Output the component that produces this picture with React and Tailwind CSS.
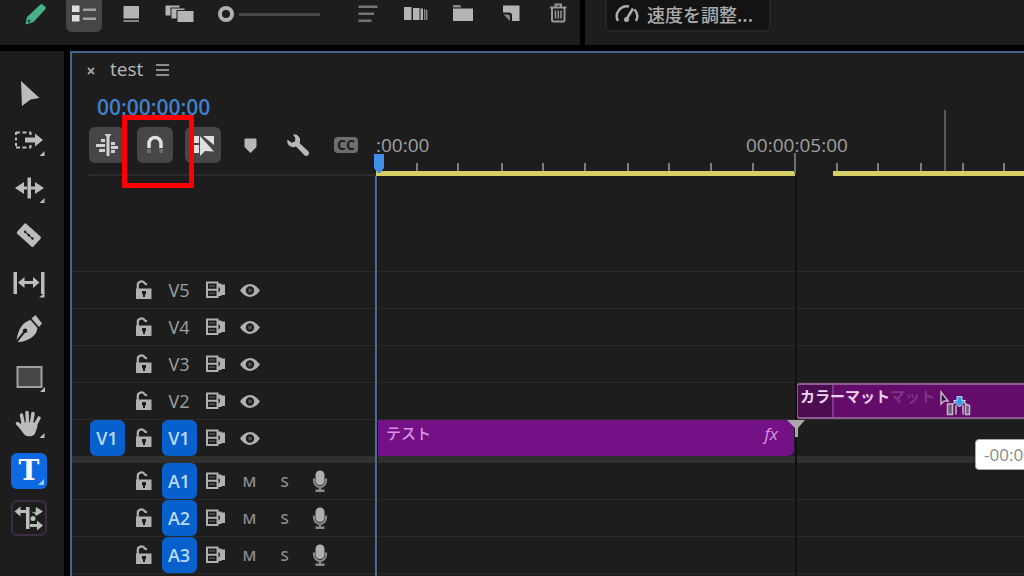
import React from "react";

const Icon = ({ size = 36, children, className = "" }) => (
  <svg width={size} height={size} viewBox={`0 0 ${size} ${size}`} fill="currentColor" className={`shrink-0 ${className}`} aria-hidden="true">
    {children}
  </svg>
);

const Corner = () => <path d="M33.500 27v5h-5z" />;

/* ---------- Tool strip ---------- */

const tools = [
  { name: "Selection", icon: <path d="M10 4 28.500 21 19.500 22.500 11 29z" /> },
  {
    name: "Track select",
    icon: (
      <>
        <path d="M5 8.500h15M5 23.500h15" fill="none" stroke="currentColor" strokeWidth="2" strokeDasharray="4 2.500" />
        <path d="M5 8v16M19.500 8v3M19.500 21v3" fill="none" stroke="currentColor" strokeWidth="2" strokeDasharray="3 2.500" />
        <path d="M14 13.500h10v-4l8 6.500-8 6.500v-4H14z" />
        <Corner />
      </>
    ),
  },
  {
    name: "Ripple edit",
    icon: (
      <>
        <path d="M16.500 6.500h3.500v21h-3.500zM4 17l9-6v4.500h3v3h-3V23zM33 17l-9-6v4.500h-4v3h4V23z" />
        <Corner />
      </>
    ),
  },
  {
    name: "Razor",
    icon: (
      <g transform="rotate(42 18 17)">
        <rect x="7" y="10.500" width="22" height="13.500" rx="1.500" />
        <path d="M12 17.300h12" stroke="#1d1d1d" strokeWidth="1" />
        <circle cx="13" cy="17.300" r="1.200" fill="#1d1d1d" />
        <circle cx="18" cy="17.300" r="1.300" fill="#1d1d1d" />
        <circle cx="23" cy="17.300" r="1.200" fill="#1d1d1d" />
      </g>
    ),
  },
  {
    name: "Slip",
    icon: (
      <>
        <path d="M2.500 7h3.500v22H2.500zM30 7h3.500v22H30z" />
        <path d="M7 17.500l6.500-5.500v4h8.500v-4l6.500 5.500-6.500 5.500v-4h-8.500v4z" />
        <path d="M33.500 28v4.500H28z" />
      </>
    ),
  },
  {
    name: "Pen",
    icon: (
      <>
        <path d="M20.500 6.500l4-3.500 6.500 8.500-3 3.500z" />
        <path d="M19.500 8l7 8c-1.300 7-5 10.500-15.300 13.700l-4.500.3 7-9a2.200 2.200 0 1 0-1.600-1.200L5.500 28C7.500 17 11.500 10 19.500 8z" />
      </>
    ),
  },
  {
    name: "Rectangle",
    icon: (
      <>
        <rect x="6.500" y="8" width="24" height="20" fill="#464646" stroke="#a0a0a0" strokeWidth="2" />
        <path d="M34 28v5h-5z" />
      </>
    ),
  },
  {
    name: "Hand",
    icon: (
      <>
        <path
          d="M12.500 19 10.500 9M16.500 17 16 6.500M20.500 17l1.500-9.500M24 19.500l4-7.500M12.500 23.500l-6-6"
          fill="none"
          stroke="currentColor"
          strokeWidth="3.500"
          strokeLinecap="round"
        />
        <path d="M10.500 16.500h15.500l.5 4-2.500 7c-1.500 3.500-9 4-11.500 0l-5-7z" />
        <Corner />
      </>
    ),
  },
  { name: "Type", type: true },
  {
    name: "Remix",
    remix: true,
    icon: (
      <>
        <path d="M3.500 11.500l6-5v3.500h5.500v3H9.500v3.500zM15 7h3.500v22H15z" />
        <path d="M20 11.500l4.500 1 .5-5.500 7 4.500-7 4.500-1-2zM19 24h7v-3.500l6 5-6 5V27h-7z" />
        <circle cx="22" cy="18.500" r="2.500" />
      </>
    ),
  },
];

const ToolStrip = () => (
  <nav aria-label="Tools" className="flex w-16 shrink-0 flex-col gap-[11px] bg-[#1d1d1d] pt-[26px] pl-[11px] text-[#bcbcbc]">
    {tools.map((t) => (
      <button
        key={t.name}
        aria-label={t.name}
        className={
          t.type
            ? "relative flex size-9 shrink-0 items-center justify-center rounded-md bg-[#0d6ae2] text-white"
            : t.remix
              ? "size-9 shrink-0 rounded-md border-2 border-[#3b2b45]"
              : "size-9 shrink-0"
        }
      >
        {t.type ? (
          <>
            <span className="font-['DejaVu_Serif'] text-[28px] leading-9 font-bold">T</span>
            <svg width="6" height="6" className="absolute right-[3px] bottom-1" aria-hidden="true">
              <path d="M6 0v6H0z" fill="#9cc7fa" />
            </svg>
          </>
        ) : (
          <Icon className={t.remix ? "-m-0.5" : ""}>{t.icon}</Icon>
        )}
      </button>
    ))}
  </nav>
);

/* ---------- Top toolbar ---------- */

const BarButton = ({ label, children, active }) => (
  <button aria-label={label} className="flex h-9 w-12 shrink-0 items-center justify-center">
    <span className={active ? "rounded-md bg-[#464646]" : ""}>
      <Icon>{children}</Icon>
    </span>
  </button>
);

const TopBar = () => (
  <header className="flex h-[45px] shrink-0 gap-[5px] overflow-hidden text-[#b4b4b4]">
    <div className="w-[580px] shrink-0 bg-[#1d1d1d]">
      <div className="-mt-1 flex h-9 items-center pl-3">
        <BarButton label="Writable">
          <g fill="#45b384">
            <path d="M22.500 8.500a1.500 1.500 0 0 1 2 0l3 2.500a1.500 1.500 0 0 1 0 2L15.500 26l-8 2.500L9 21z" />
            <circle cx="11" cy="25" r="1.500" fill="#1d4a38" />
          </g>
        </BarButton>
        <BarButton label="List view" active>
          <path d="M6 9.500h7.500V16H6zM6 19h7.500v6.500H6z" fill="#e0e0e0" />
          <path d="M17 12.500h13v2.500H17zM17 21.500h13V24H17z" fill="#a0a0a0" />
        </BarButton>
        <BarButton label="Icon view">
          <path d="M9.500 10H25v12.500H9.500z" />
          <path d="M9.500 24H25v2H9.500z" fill="#858585" />
        </BarButton>
        <BarButton label="Freeform view">
          <g stroke="#1d1d1d">
            <rect x="3" y="9" width="15" height="11" />
            <rect x="9" y="12" width="14" height="11" />
            <rect x="15" y="14.500" width="17" height="12" />
          </g>
        </BarButton>
        <input
          type="range"
          aria-label="Icon size"
          defaultValue="0"
          className="ml-3.5 h-4 w-[102px] shrink-0 appearance-none bg-linear-to-r from-[#484848] to-[#484848] bg-[length:100%_3px] bg-center bg-no-repeat [&::-webkit-slider-thumb]:size-4 [&::-webkit-slider-thumb]:appearance-none [&::-webkit-slider-thumb]:rounded-full [&::-webkit-slider-thumb]:border-4 [&::-webkit-slider-thumb]:border-[#b0b0b0] [&::-webkit-slider-thumb]:bg-[#1d1d1d] [&::-webkit-slider-thumb]:shadow-[0_0_0_5px_#1d1d1d]"
        />
        <div className="ml-[23px] flex">
          <BarButton label="Sort icons">
            <path d="M9.500 9.500h19V12h-19zM9.500 16.500h15.500V19H9.500zM9.500 23.500h13V26h-13z" fill="#757575" />
          </BarButton>
          <BarButton label="Automate to sequence">
            <path d="M7 11h7.500v13H7zM16 12h6.500v12H16zM23.500 12.500H26V24h-2.500zM27.300 13h1V24h-1zM29.300 14h1v10h-1z" />
          </BarButton>
          <BarButton label="New bin">
            <path d="M8 9h7l1.500 2.500H8z" fill="#858585" />
            <path d="M8 12.500h20V25H8z" />
          </BarButton>
          <BarButton label="New item">
            <path d="M10 9.500h16.500V25H19v-5.500a3 3 0 0 0-3-3h-6z" />
            <path d="M10.500 18.500h4.500a2 2 0 0 1 2 2V25z" fill="#858585" />
          </BarButton>
          <BarButton label="Delete">
            <g fill="none" stroke="#989898" strokeWidth="2">
              <path d="M9 11.500h16.500M14.500 11V8.500h5.500V11M11 12.500v11.500q0 1.500 1.500 1.500h9.500q1.500 0 1.500-1.500V12.500" />
              <path d="M14.500 14.500v8M17.300 14.500v8M20 14.500v8" strokeWidth="1.500" />
            </g>
          </BarButton>
        </div>
      </div>
    </div>
    <div className="flex-1 bg-[#1d1d1d] pl-5">
      <button className="-mt-1 flex h-9 items-center gap-2 rounded-md border-2 border-[#262626] bg-[#131313] pr-4 pl-2 font-['Noto_Sans_CJK_JP',sans-serif] text-[18px] font-medium text-[#acacac]">
        <Icon size={24}>
          <g fill="none" stroke="currentColor" strokeWidth="2.500">
            <path d="M3 19a10 10 0 0 1 11-14.500M19.500 7.500A10 10 0 0 1 21 19" />
            <path d="M11 18 18 6.500" />
          </g>
          <circle cx="11.500" cy="17.500" r="2.500" />
        </Icon>
        <span className="whitespace-nowrap">速度を調整...</span>
      </button>
    </div>
  </header>
);

/* ---------- Timeline header ---------- */

const HeaderButton = ({ label, on, children }) => (
  <button aria-label={label} aria-pressed={!!on} className={on ? "size-9 rounded-md bg-[#464646]" : "size-9"}>
    <Icon>{children}</Icon>
  </button>
);

const TimelineHead = () => (
  <div className="flex w-[304px] shrink-0 flex-col pl-[17px] text-[#b8b8b8]">
    <div className="flex h-8 items-center">
      <button aria-label="Close sequence" className="w-[21px]">
        <svg width="8" height="8" viewBox="0 0 8 8" className="mt-1 -ml-0.5" aria-hidden="true">
          <path d="M1 1l6 6M7 1L1 7" stroke="#9c9c9c" strokeWidth="2" />
        </svg>
      </button>
      <h1 className="w-[46px] text-[19px] leading-8 font-medium">test</h1>
      <button aria-label="Panel menu">
        <svg width="14" height="12" viewBox="0 0 14 12" className="mt-0.5" aria-hidden="true">
          <path d="M0 1h13M0 6h13M0 11h13" stroke="#8c8c8c" strokeWidth="2" />
        </svg>
      </button>
    </div>
    <div className="pt-2 pl-2 text-[21px] leading-7 font-semibold text-[#3f80cd]">00:00:00:00</div>
    <div className="relative mt-1.5 flex gap-3 pb-[11px]">
      <HeaderButton label="Insert and overwrite sequences as nests" on>
        <g fill="#d0d0d0">
          <path d="M17.500 8h3v21h-3zM15.500 7h7l-3.500 5z" />
          <path d="M12 12h4v3h-4zM7 17h9v3H7zM10 22h6v3h-6zM22 15h4v3h-4zM22 19h7v3h-7zM22 23h4v3h-4z" />
        </g>
      </HeaderButton>
      <HeaderButton label="Snap" on>
        <path d="M12 21v-4.500a6 6 0 0 1 12 0V21" fill="none" stroke="#e0e0e0" strokeWidth="3.500" />
        <path d="M10.300 22h3.500v4h-3.500zM22.300 22h3.500v4h-3.500z" fill="#707070" />
      </HeaderButton>
      <HeaderButton label="Linked selection" on>
        <g fill="#e0e0e0">
          <path d="M6 9h8v7H6zM6 18h8v8H6zM18 9h11v9z" />
          <path d="M15 9v20l5-5 9 .5z" />
        </g>
      </HeaderButton>
      <HeaderButton label="Add marker">
        <path d="M11.500 12.500a1 1 0 0 1 1-1h10a1 1 0 0 1 1 1V20l-6 6-6-6z" />
      </HeaderButton>
      <HeaderButton label="Timeline display settings">
        <path d="M12 7.500a6 6 0 0 1 6.500 8.500l9 8.500a2.800 2.800 0 0 1-3.800 4L15 19.500A6 6 0 0 1 6.500 12.500l4 3.300 3.500-1.300.3-3.500z" />
      </HeaderButton>
      <button aria-label="Captions" className="flex size-9 items-center justify-center">
        <span className="mr-0.5 rounded-sm bg-[#6e6e6e] px-[3px] text-[14px] leading-4 font-bold text-[#1d1d1d]">CC</span>
      </button>
      <div aria-hidden="true" className="pointer-events-none absolute -top-3 left-[33px] h-[73px] w-[72px] border-[5px] border-[#fb0000]" />
    </div>
    <div className="h-0.5 bg-[#2b2b2b]" />
  </div>
);

const ticks = [41, 82, 126, 167, 209, 252, 293, 335, 377, 461, 502, 545, 587, 628];

const Ruler = () => (
  <div className="relative flex flex-1 flex-col justify-end overflow-hidden text-[19px] leading-6 font-medium text-[#a0a0a0]">
    <svg width="100%" height="66" className="absolute bottom-0 left-0" shapeRendering="crispEdges" aria-hidden="true">
      {ticks.map((x) => (
        <rect key={x} x={x - 1} y="53" width="2" height="8" fill="#7c7c7c" />
      ))}
      <rect x="418" y="43" width="2" height="20" fill="#6c6c6c" />
      <rect x="568" y="0" width="2" height="61" fill="#585858" />
    </svg>
    <div className="flex">
      <span className="w-[370px] shrink-0">:00:00</span>
      <span>00:00:05:00</span>
    </div>
    <div className="mt-[14px] flex h-[5px] gap-[38px]">
      <div className="w-[419px] shrink-0 bg-[#d6cf66]" />
      <div className="flex-1 bg-[#d6cf66]" />
    </div>
  </div>
);

/* ---------- Tracks ---------- */

const Lock = () => (
  <Icon size={20}>
    <path d="M4.800 9V5.500a3.700 3.700 0 0 1 7-2L14 4.500" fill="none" stroke="currentColor" strokeWidth="2.200" />
    <path fillRule="evenodd" d="M3 8.500h15.500V19H3zM9 11v3l1 .5V17h2v-2.500l1-.5v-3z" />
  </Icon>
);

const Sync = () => (
  <Icon size={20}>
    <path d="M2 2.500h10.500v14.500H2zM2 9.700h11" fill="none" stroke="currentColor" strokeWidth="2" />
    <path d="M4 5.300h6v1.500H4zM4 12.500h6v1.500H4z" fill="#505050" />
    <path fillRule="evenodd" d="M12 3.500h4l1 1h3v10.500h-3l-1 1h-4v-3.500h1.500l1.500-1.500v-2.500l-1.500-1.500H12z" />
  </Icon>
);

const Eye = () => (
  <Icon size={20}>
    <path fillRule="evenodd" d="M0 10.500Q4.500 4 10 4t10 6.500Q15.500 17 10 17T0 10.500zm10-4.200a4.200 4.200 0 1 0 0 8.400 4.200 4.200 0 0 0 0-8.400z" />
    <circle cx="10" cy="10.500" r="2" fill="#505050" />
  </Icon>
);

const Mic = () => (
  <Icon size={24}>
    <rect x="7.500" y="1.500" width="9" height="14.500" rx="4.500" />
    <path d="M6 9.500v2a6 6.500 0 0 0 12 0v-2M12 17.500V21" fill="none" stroke="#8a8a8a" strokeWidth="2.200" />
    <path d="M7.500 20.500h9V23h-9z" fill="#8a8a8a" />
  </Icon>
);

const chip = "h-9 w-[35px] rounded-md bg-[#0860cc] text-[18px] leading-9 font-semibold text-[#b8daff]";

const Track = ({ id, audio, source, target, children }) => (
  <div className={audio ? "flex h-[37px] shrink-0 border-b border-[#2b2b2b]" : "flex h-[37px] shrink-0 border-t border-[#2b2b2b]"}>
    <div className="grid w-[304px] shrink-0 grid-cols-[36px_36px_36px_35px_35px_35px_35px] items-center justify-items-center pl-[17px] text-[#b0b0b0]">
      {source ? <button aria-label={`Source ${id}`} className={chip}>{source}</button> : <span />}
      <button aria-label={`Lock ${id}`}><Lock /></button>
      <button className={target ? chip : "text-[18px] leading-9 font-medium text-[#a0a0a0]"}>{id}</button>
      <button aria-label={`Sync lock ${id}`}><Sync /></button>
      {audio ? (
        <>
          <button aria-label={`Mute ${id}`} className="text-[15px] leading-5 font-semibold text-[#8c8c8c]">M</button>
          <button aria-label={`Solo ${id}`} className="text-[15px] leading-5 font-semibold text-[#8c8c8c]">S</button>
          <button aria-label={`Voice-over ${id}`}><Mic /></button>
        </>
      ) : (
        <button aria-label={`Toggle output ${id}`}><Eye /></button>
      )}
    </div>
    <div className="flex min-w-0 flex-1">{children}</div>
  </div>
);

const Timeline = () => (
  <main className="relative flex min-w-0 flex-1 flex-col overflow-hidden border-t-2 border-l-2 border-[#43668f] bg-[#1d1d1d]">
    <div className="flex shrink-0">
      <TimelineHead />
      <Ruler />
    </div>
    <div className="h-[95px] shrink-0" />
    <Track id="V5" />
    <Track id="V4" />
    <Track id="V3" />
    <Track id="V2">
      <div className="ml-[420px] flex min-w-0 flex-1 overflow-hidden rounded-l-sm border-y-2 border-l-2 border-[#8d5a94] bg-[#640c69] font-['Noto_Sans_CJK_JP',sans-serif] text-[15px] leading-[22px] font-bold whitespace-nowrap">
        <div className="w-9 shrink-0 overflow-visible border-r-2 border-[#7c3c83] bg-[#4b0c50] pl-0.5 text-[#ecd2ee]">カラーマット</div>
        <div className="pl-[56px] text-[#7d3585]">マット</div>
      </div>
    </Track>
    <Track id="V1" source="V1" target>
      <div className="flex w-[418px] shrink-0 justify-between rounded-r-md bg-[#751186] pr-4 pl-2.5 text-[15px] font-medium text-[#d795df]">
        <span className="font-['Noto_Sans_CJK_JP',sans-serif] leading-[26px]">テスト</span>
        <span className="text-[17px] leading-7 italic">fx</span>
      </div>
    </Track>
    <div className="h-[7px] shrink-0 bg-[#303030]" />
    <Track id="A1" audio target />
    <Track id="A2" audio target />
    <Track id="A3" audio target />

    <div aria-hidden="true" className="absolute top-[123px] bottom-0 left-[303px] w-[3px] border-r border-[#0b1524] bg-[#4c6c98]" />
    <svg width="12" height="20" viewBox="0 0 12 20" className="absolute top-[101px] left-[301px]" aria-hidden="true">
      <path d="M1 0h10v14l-4 5H5l-4-5z" fill="#3f90e6" />
    </svg>
    <div aria-hidden="true" className="absolute top-[123px] bottom-0 left-[723px] w-0.5 bg-[#101010]" />
    <svg width="18" height="18" viewBox="0 0 18 18" className="absolute top-[367px] left-[715px]" aria-hidden="true">
      <path d="M0 0h18l-7 8v9H8V8z" fill="#a9a9a9" />
    </svg>
    <svg width="34" height="28" viewBox="0 0 34 28" className="absolute top-[337px] left-[867px]" aria-hidden="true">
      <path d="M2 2v12l3-3 4 0z" fill="#2a1030" stroke="#c8b4cc" strokeWidth="1.500" />
      <g fill="#6a5f70" stroke="#c8b4cc" strokeWidth="1.500">
        <path d="M8.500 14h5v10.500h-5zM26.500 14l4 1.500v9h-4z" />
        <path d="M14 14l4-4M27 14l-4-4M17 15v9.500M24 15v9.500" />
      </g>
      <path d="M18 6.500h5v4h3.500l-6 6.500-6-6.500H18z" fill="#3c9cf0" stroke="#bcd8f4" />
    </svg>
    <div role="tooltip" className="absolute top-[386px] left-[903px] flex h-[31px] items-center rounded-sm border border-[#a8a8a8] bg-white pl-2 text-[17px] whitespace-nowrap text-[#8a8a8a]">
      -00:00
    </div>
  </main>
);

export default function App() {
  return (
    <div className="flex h-screen flex-col overflow-hidden bg-black font-['Open_Sans','Noto_Sans_CJK_JP',sans-serif]">
      <TopBar />
      <div className="mt-1.5 flex min-h-0 flex-1 gap-1.5">
        <ToolStrip />
        <Timeline />
      </div>
    </div>
  );
}
